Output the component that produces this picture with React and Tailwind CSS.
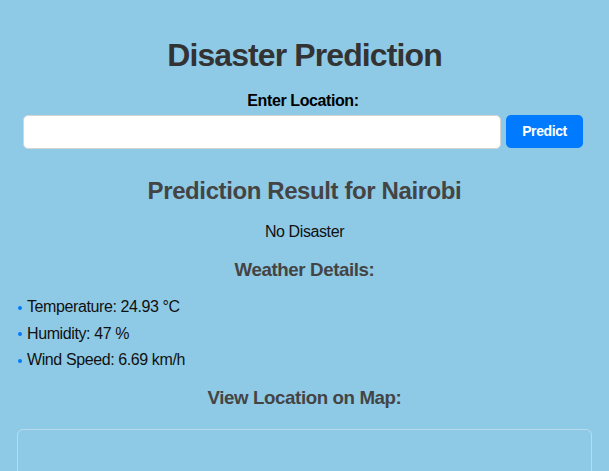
import { useState } from 'react'

const weather = [
  { label: 'Temperature', value: '24.93 °C' },
  { label: 'Humidity', value: '47 %' },
  { label: 'Wind Speed', value: '6.69 km/h' },
]

export default function App() {
  const [location, setLocation] = useState('')

  return (
    <div className="min-h-screen bg-[#8ecae6] font-['Liberation_Sans',Arial,sans-serif] tracking-[-0.025em]">
      <div className="px-[17px] pt-[36px]">
        <h1 className="text-center text-[32px] font-bold leading-[38px] tracking-[-0.028em] text-[#333]">
          Disaster Prediction
        </h1>

        <form
          className="mt-[17px] px-[6px] pr-[9px]"
          onSubmit={(event) => event.preventDefault()}
        >
          <label className="block text-center text-[16px] font-bold leading-[20px] text-black">
            Enter Location:
          </label>
          <div className="mt-[4px] flex gap-[5px]">
            <input
              className="h-[34px] flex-1 rounded-[5px] border border-[#d4d4d4] bg-white px-2 text-[16px] outline-none"
              value={location}
              onChange={(event) => setLocation(event.target.value)}
            />
            <button
              className="h-[33px] w-[77px] rounded-[5px] bg-[#007bff] text-[14px] font-bold text-white"
              type="submit"
            >
              Predict
            </button>
          </div>
        </form>

        <h2 className="mt-[28px] text-center text-[24px] font-bold leading-[28px] text-[#444]">
          Prediction Result for Nairobi
        </h2>
        <p className="mt-[17px] text-center text-[16px] leading-[20px] text-[#111]">
          No Disaster
        </p>

        <h3 className="mt-[17px] text-center text-[18.72px] font-bold leading-[22px] text-[#444]">
          Weather Details:
        </h3>
        <ul className="mt-[16px] flex flex-col gap-[6.5px]">
          {weather.map((item) => (
            <li key={item.label} className="flex items-center text-[16px] leading-[20px] text-[#111]">
              <span className="ml-[1px] mr-[5px] mt-[1px] h-[4px] w-[4px] shrink-0 rounded-full bg-[#007bff]" />
              {item.label}: {item.value}
            </li>
          ))}
        </ul>

        <h3 className="mt-[17px] text-center text-[18.72px] font-bold leading-[22px] text-[#444]">
          View Location on Map:
        </h3>
        <div className="mt-[20px] h-[200px] rounded-[6px] border border-[#b9dcec]" />
      </div>
    </div>
  )
}
